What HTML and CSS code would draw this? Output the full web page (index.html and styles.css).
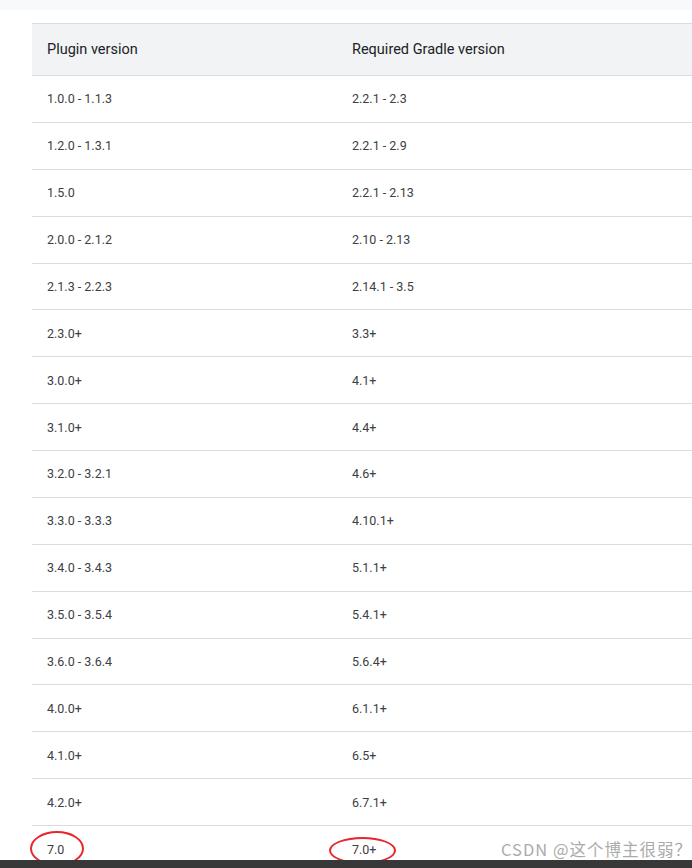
FILE: index.html
```html
<!DOCTYPE html>
<html>
<head>
<meta charset="utf-8">
<link rel="stylesheet" href="styles.css">
</head>
<body>
<div class="topstrip"></div>
<div class="wrap">
<div class="versions" role="table">
<div class="row head" role="row"><div class="cell" role="columnheader">Plugin version</div><div class="cell" role="columnheader">Required Gradle version</div></div>
<div class="row" role="row"><div class="cell">1.0.0 - 1.1.3</div><div class="cell">2.2.1 - 2.3</div></div>
<div class="row" role="row"><div class="cell">1.2.0 - 1.3.1</div><div class="cell">2.2.1 - 2.9</div></div>
<div class="row" role="row"><div class="cell">1.5.0</div><div class="cell">2.2.1 - 2.13</div></div>
<div class="row" role="row"><div class="cell">2.0.0 - 2.1.2</div><div class="cell">2.10 - 2.13</div></div>
<div class="row" role="row"><div class="cell">2.1.3 - 2.2.3</div><div class="cell">2.14.1 - 3.5</div></div>
<div class="row" role="row"><div class="cell">2.3.0+</div><div class="cell">3.3+</div></div>
<div class="row" role="row"><div class="cell">3.0.0+</div><div class="cell">4.1+</div></div>
<div class="row" role="row"><div class="cell">3.1.0+</div><div class="cell">4.4+</div></div>
<div class="row" role="row"><div class="cell">3.2.0 - 3.2.1</div><div class="cell">4.6+</div></div>
<div class="row" role="row"><div class="cell">3.3.0 - 3.3.3</div><div class="cell">4.10.1+</div></div>
<div class="row" role="row"><div class="cell">3.4.0 - 3.4.3</div><div class="cell">5.1.1+</div></div>
<div class="row" role="row"><div class="cell">3.5.0 - 3.5.4</div><div class="cell">5.4.1+</div></div>
<div class="row" role="row"><div class="cell">3.6.0 - 3.6.4</div><div class="cell">5.6.4+</div></div>
<div class="row" role="row"><div class="cell">4.0.0+</div><div class="cell">6.1.1+</div></div>
<div class="row" role="row"><div class="cell">4.1.0+</div><div class="cell">6.5+</div></div>
<div class="row" role="row"><div class="cell">4.2.0+</div><div class="cell">6.7.1+</div></div>
<div class="row last" role="row"><div class="cell"><span class="mark mark-a">7.0</span></div><div class="cell"><span class="mark mark-b">7.0+</span></div></div>
</div>
</div>
<div class="watermark">CSDN @这个博主很弱？</div>
<div class="darkbar"></div>
</body>
</html>
```
FILE: styles.css
```css
html, body {
  margin: 0;
  padding: 0;
  height: 868px;
  overflow: hidden;
  background: #ffffff;
  font-family: Roboto, "Noto Sans", Arial, sans-serif;
  color: #202124;
}
.topstrip {
  height: 10px;
  background: #f8f9fa;
}
.wrap {
  padding: 13px 0 0 32px;
}
.versions {
  display: flex;
  flex-direction: column;
  font-size: 12.5px;
}
.row {
  display: grid;
  grid-template-columns: 305px 1fr;
  height: 46.875px;
  border-bottom: 1px solid #dadce0;
  box-sizing: border-box;
  color: #3c4043;
}
.row.head {
  height: 53px;
  background: #f1f3f4;
  border-top: 1px solid #dadce0;
  font-size: 14.5px;
  color: #202124;
}
.row.last {
  border-bottom: none;
}
.cell {
  display: flex;
  align-items: center;
  padding-left: 15px;
}
.mark {
  position: relative;
  display: inline-block;
}
.mark::after {
  content: "";
  position: absolute;
  border: 2px solid #e8262b;
  border-radius: 50%;
}
.mark-a::after {
  left: -17px;
  top: -11px;
  width: 50px;
  height: 31px;
}
.mark-b::after {
  left: -23px;
  top: -5px;
  width: 63px;
  height: 23px;
}
.watermark {
  position: absolute;
  left: 501px;
  top: 837px;
  white-space: nowrap;
  font-family: "Noto Sans CJK SC", "Noto Sans", sans-serif;
  font-size: 16.5px;
  color: #ababab;
  letter-spacing: 1px;
}
.darkbar {
  position: absolute;
  left: 0;
  right: 0;
  top: 860px;
  height: 8px;
  background: #383838;
}
```
